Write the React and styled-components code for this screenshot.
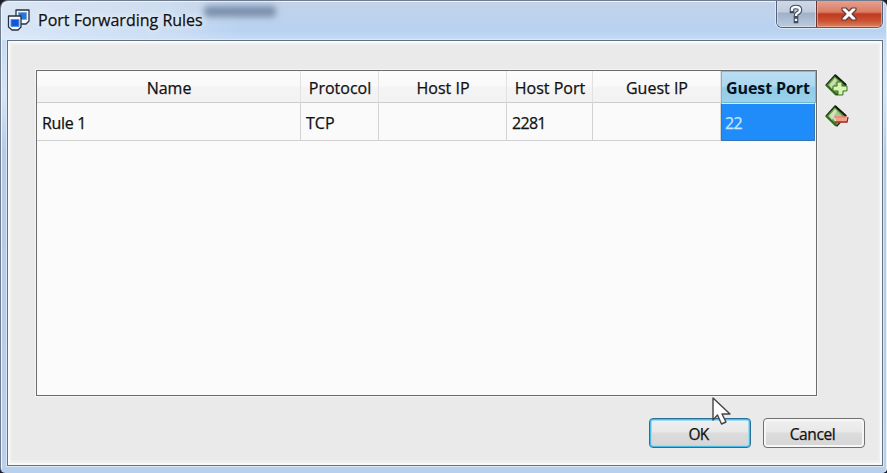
import React from "react";
import styled, { createGlobalStyle, css } from "styled-components";

const GlobalStyle = createGlobalStyle`
  * { box-sizing: border-box; }
  body { margin: 0; overflow: hidden; background: #191e29; }
`;

const Window = styled.main`
  position: relative;
  width: 887px;
  height: 473px;
  padding: 0 4px 7px 6px;
  display: flex;
  flex-direction: column;
  overflow: hidden;
  border: solid #707b8d;
  border-width: 1px 0 0 1px;
  border-radius: 8px 7px 5px 5px;
  background: linear-gradient(#c2d2e8 0, #bfd2ec 12px, #b8d2f1 30px, #c4dbf5 38px, #d5e4f5 95px, #b4cbe8 150px, #b9d0ed 100%);
  box-shadow: inset 1px 1px 0 #edf4fb, inset -1px 0 0 #e6f0fa;
  color: #111;
  font-family: "Open Sans", "Noto Sans", sans-serif;
  font-size: 16px;
  -webkit-text-stroke: 0.25px currentColor;
`;

const TitleBar = styled.header`
  height: 39px;
  flex: none;
  display: flex;
  align-items: flex-start;
`;

const IconFrame = styled.div`
  position: relative;
  height: 39px;
`;

const AppIcon = styled.svg`
  display: block;
  width: 24px;
  height: 24px;
  margin: 7px 0 0 0;
`;

const Title = styled.h1`
  position: relative;
  margin: 7px 0 0 7px;
  font-size: 16px;
  line-height: 24px;
  font-weight: 400;
  white-space: nowrap;
  text-shadow: 0 0 7px #fff, 0 0 12px #e8f1fc;
`;

const Smudge = styled.div`
  position: absolute;
  left: 203px;
  top: 5px;
  width: 72px;
  height: 11px;
  border-radius: 4px;
  background: #7c90ad;
  filter: blur(3px);
`;

const Glow = styled.div`
  position: absolute;
  left: 1px;
  top: 1px;
  width: 240px;
  height: 38px;
  background: linear-gradient(90deg, #edf3fb99, #dbe7f777 70%, transparent);
`;

const Controls = styled.div`
  display: flex;
  margin: -1px 0 0 auto;
  width: 107px;
  height: 28px;
  border: 1px solid #52617a;
  border-top: 0;
  border-radius: 0 0 6px 6px;
  overflow: hidden;
  box-shadow: 0 0 0 1px #dce9f7;
  position: relative;
`;

const Control = styled.button`
  display: grid;
  place-items: center;
  border: 0;
  padding: 0;
  width: 39px;
  box-shadow: inset 0 0 0 1px #dfe7f2aa;
  background: linear-gradient(#d1d9e6 0, #c2ccdc 12px, #9fb0c8 13px, #bccbdf 100%);
  ${(p) => p.$close && css`
    width: 67px;
    border-left: 1px solid #663332;
    box-shadow: inset 0 0 0 1px #eeb5a2aa;
    background: linear-gradient(#e7a491 0, #d97c65 12px, #bf3a1f 14px, #cb5233 21px, #dc835e 100%);
  `}
`;

const Client = styled.section`
  flex: 1;
  min-height: 0;
  border: 1px solid #627080;
  outline: 1px solid #dce9f5;
  background: #eaeaea;
  box-shadow: inset 0 0 0 2px #f8fafb, inset 0 0 0 4px #eef0f0;
  padding: 29px 17px 0 28px;
  display: flex;
  flex-direction: column;
`;

const Content = styled.div`
  display: flex;
`;

const Table = styled.div`
  width: 781px;
  height: 326px;
  border: 1px solid #6c6c6c;
  outline: 1px solid #f6f6f6;
  background: #fbfbfb;
`;

const Row = styled.div`
  display: grid;
  grid-template-columns: 264px 78px 128px 86px 128px ${(p) => (p.$header ? 95 : 94)}px;
  height: ${(p) => (p.$header ? 32 : 38)}px;
`;

const HeaderCell = styled.div`
  display: flex;
  justify-content: center;
  align-items: center;
  padding: 3px 0 0 1px;
  border-right: 1px solid #e1e1e1;
  border-bottom: 1px solid #cccccc;
  background: linear-gradient(#fcfcfc, #f9f9f9 15px, #f4f4f5 16px, #f2f2f2);
  white-space: nowrap;
  ${(p) => p.$active && css`
    padding: 1px 1px 0 0;
    color: #07121d;
    font-weight: 700;
    letter-spacing: -0.1px;
    -webkit-text-stroke: 0;
    border: 1px solid #76b8d2;
    border-top-color: #91b4c7;
    background: linear-gradient(#b9dff3, #acd8ef 14px, #91cbe9 16px, #9bd2ec);
  `}
`;

const Cell = styled.div`
  padding: 8px 5px 0;
  line-height: 24px;
  border-right: 1px solid #d3d3d3;
  border-bottom: 1px solid #d0d0d0;
  background: #fafafa;
  letter-spacing: ${(p) => p.$tracking || 0}px;
  ${(p) => p.$selected && css`
    color: #cae5ff;
    background: #208cfa;
    border: 1px solid #3477b7;
    border-top-color: #dbe9f6;
    padding-left: 3px;
    padding-top: 7px;
  `}
`;

const Tools = styled.aside`
  display: flex;
  flex-direction: column;
  gap: 6px;
  padding: 3px 0 0 7px;
`;

const ToolButton = styled.button`
  display: block;
  border: 0;
  padding: 0;
  background: transparent;
  width: 26px;
  height: 25px;
`;

const Footer = styled.footer`
  display: flex;
  justify-content: flex-end;
  gap: 12px;
  margin-top: 22px;
`;

const DialogButton = styled.button`
  width: 102px;
  height: 30px;
  padding: 1px 3px 0 0;
  border: 1px solid ${(p) => (p.$primary ? "#2b6f96" : "#707070")};
  border-radius: 4px;
  background: linear-gradient(#f0f0f0, #e8e8e8 13px, #dcdcdc 14px, #d5d5d5);
  box-shadow: ${(p) => (p.$primary ? "inset 0 0 0 1px #4dbbe8, inset 0 0 0 2px #9cdef3" : "inset 0 0 0 2px #f6f6f6")};
  color: #111;
  font: 15.5px "Open Sans", "Noto Sans", sans-serif;
  letter-spacing: ${(p) => p.$tracking}px;
  -webkit-text-stroke: 0.25px currentColor;
`;

const Pointer = styled.svg`
  position: absolute;
  left: 708px;
  top: 395px;
  width: 22px;
  height: 30px;
`;

const columns = [
  { label: "Name", value: "Rule 1", valueTracking: -0.3 },
  { label: "Protocol", value: "TCP", valueTracking: 0 },
  { label: "Host IP", value: "" },
  { label: "Host Port", value: "2281", valueTracking: -0.7 },
  { label: "Guest IP", value: "" },
  { label: "Guest Port", value: "22", valueTracking: -0.7, active: true },
];

function PortForwardIcon() {
  return (
    <AppIcon viewBox="0 0 24 24">
      <g stroke="#263044" strokeWidth="1.3" fill="#f5f7fa" strokeLinejoin="round">
        <path d="M9 2h13v11l-3 3h-7l-3-3z" />
        <path d="M11.5 4.5h8v7h-8z" fill="#2478df" stroke="#83a8d6" strokeWidth="1" />
        <path d="M1.5 8H14v11l-3 3H5l-3.5-3z" />
        <path d="M4 11.5h8v7H4z" fill="#1256dc" stroke="#5592e5" strokeWidth="1" />
      </g>
    </AppIcon>
  );
}

function RuleIcon({ remove }) {
  return (
    <svg width="26" height="25" viewBox="0 0 26 25">
      <path d="M2 12 11 2l11 10-9 10z" fill={remove ? "#679c4d" : "#5d9a3c"} stroke="#1c3515" strokeWidth="1.2" strokeLinejoin="round" />
      <path d="m5 12 6-7 7 7-6 6z" fill={remove ? "#a8c98d" : "#8fbd6b"} />
      <path d="m5 12 6-7 2 2-5 9z" fill="#dfedcd" opacity=".7" />
      <path d="m11 2 11 10" fill="none" stroke="#151f12" strokeWidth="2" />
      <path d="m2 12 10 10" fill="none" stroke="#356f20" strokeWidth="1.7" />
      {remove ? (
        <>
          <path d="M10 13h13v5H12z" fill="#f1a089" stroke="#f9eee8" />
          <path d="M11 18h12l1-5" fill="none" stroke="#9c2219" strokeWidth="1.3" />
          <path d="M10 13h13" stroke="#ed5140" />
        </>
      ) : (
        <>
          <path d="M13 9h5v4h5v5h-4v4h-5v-4H9v-5h4z" fill="#c5e69a" stroke="#39782b" strokeWidth="1" />
          <path d="M14 10h3v4h5v3h-4v4h-3v-4h-5v-3h4z" fill="#dcf1b8" />
        </>
      )}
    </svg>
  );
}

export default function App() {
  return (
    <>
      <GlobalStyle />
      <Window>
        <Glow />
        <Smudge />
        <TitleBar>
          <IconFrame><PortForwardIcon /></IconFrame>
          <Title>Port Forwarding Rules</Title>
          <Controls>
            <Control aria-label="Help">
              <svg width="18" height="20" viewBox="0 0 18 20">
                <g fill="none" strokeLinejoin="round">
                  <path d="M5 7V5q0-2 4-2t4 3q0 2-3 3.5-1 .5-1 2.5M9 14.5V17" stroke="#414b5b" strokeWidth="4.6" strokeLinecap="square" />
                  <path d="M5 7V5q0-2 4-2t4 3q0 2-3 3.5-1 .5-1 2.5M9 14.7V17" stroke="#f7f9fc" strokeWidth="2.4" />
                </g>
              </svg>
            </Control>
            <Control $close aria-label="Close">
              <svg width="18" height="16" viewBox="0 0 18 16">
                <path d="M2 2h4l3 3 3-3h4v2l-4 4 4 4v2h-4l-3-3-3 3H2v-2l4-4-4-4z" fill="#fff" stroke="#633c3b" strokeWidth="1.2" strokeLinejoin="round" />
              </svg>
            </Control>
          </Controls>
        </TitleBar>
        <Client>
          <Content>
            <Table>
              <Row $header>
                {columns.map((c) => <HeaderCell key={c.label} $active={c.active}>{c.label}</HeaderCell>)}
              </Row>
              <Row>
                {columns.map((c) => <Cell key={c.label} $selected={c.active} $tracking={c.valueTracking}>{c.value}</Cell>)}
              </Row>
            </Table>
            <Tools>
              <ToolButton aria-label="Add rule"><RuleIcon /></ToolButton>
              <ToolButton aria-label="Remove rule"><RuleIcon remove /></ToolButton>
            </Tools>
          </Content>
          <Footer>
            <DialogButton $primary $tracking={-0.7}>OK</DialogButton>
            <DialogButton $tracking={-0.4}>Cancel</DialogButton>
          </Footer>
        </Client>
        <Pointer viewBox="0 0 22 30">
          <path d="M4 2v22l4.5-5 4 9 4.5-2-4-8h8z" fill="#fff" stroke="#444" strokeWidth="1.4" strokeLinejoin="round" />
        </Pointer>
      </Window>
    </>
  );
}
